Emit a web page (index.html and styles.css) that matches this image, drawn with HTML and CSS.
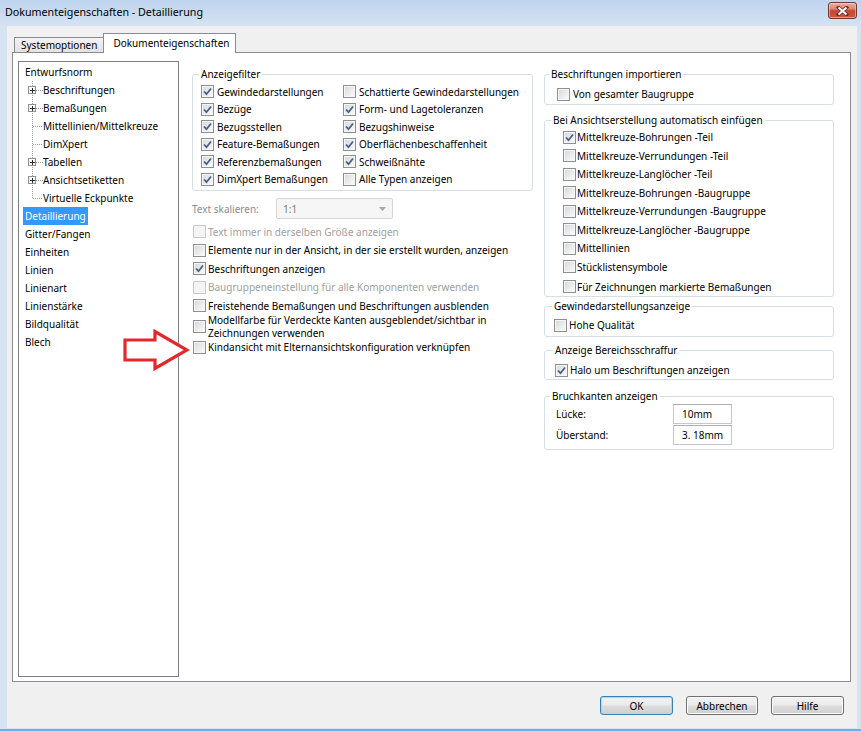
FILE: index.html
```html
<!DOCTYPE html>
<html lang="de">
<head>
<meta charset="utf-8">
<title>Dokumenteigenschaften - Detaillierung</title>
<link rel="stylesheet" href="styles.css">
</head>
<body>
<div class="window">
  <div class="titlebar">
    <span class="title">Dokumenteigenschaften - Detaillierung</span>
    <span class="close"><svg width="13" height="10" viewBox="0 0 13 10"><path d="M2.5 1.5 L10.5 8.5 M10.5 1.5 L2.5 8.5" stroke="#6b3027" stroke-width="3.6" stroke-linecap="square" fill="none"/><path d="M2.5 1.5 L10.5 8.5 M10.5 1.5 L2.5 8.5" stroke="#fff" stroke-width="2" fill="none"/></svg></span>
  </div>
  <div class="client">
    <div class="tabs">
      <div class="tab">Systemoptionen</div>
      <div class="tab active">Dokumenteigenschaften</div>
    </div>
    <div class="panel">
      <div class="tree">
        <div class="trow">Entwurfsnorm</div>
        <div class="trow"><svg class="gut" width="18" height="18"><path d="M7.5 0 V18 M11 9.5 H18" class="dots"/><rect x="3.5" y="5.5" width="7" height="7" class="pbox"/><path d="M5 9.5 H10 M7.5 7 V12" class="plus"/></svg>Beschriftungen</div>
        <div class="trow"><svg class="gut" width="18" height="18"><path d="M7.5 0 V18 M11 9.5 H18" class="dots"/><rect x="3.5" y="5.5" width="7" height="7" class="pbox"/><path d="M5 9.5 H10 M7.5 7 V12" class="plus"/></svg>Bemaßungen</div>
        <div class="trow"><svg class="gut" width="18" height="18"><path d="M7.5 0 V18 M8 9.5 H18" class="dots"/></svg>Mittellinien/Mittelkreuze</div>
        <div class="trow"><svg class="gut" width="18" height="18"><path d="M7.5 0 V18 M8 9.5 H18" class="dots"/></svg>DimXpert</div>
        <div class="trow"><svg class="gut" width="18" height="18"><path d="M7.5 0 V18 M11 9.5 H18" class="dots"/><rect x="3.5" y="5.5" width="7" height="7" class="pbox"/><path d="M5 9.5 H10 M7.5 7 V12" class="plus"/></svg>Tabellen</div>
        <div class="trow"><svg class="gut" width="18" height="18"><path d="M7.5 0 V18 M11 9.5 H18" class="dots"/><rect x="3.5" y="5.5" width="7" height="7" class="pbox"/><path d="M5 9.5 H10 M7.5 7 V12" class="plus"/></svg>Ansichtsetiketten</div>
        <div class="trow"><svg class="gut" width="18" height="18"><path d="M7.5 0 V9.5 M8 9.5 H18" class="dots"/></svg>Virtuelle Eckpunkte</div>
        <div class="trow"><span class="sel">Detaillierung</span></div>
        <div class="trow">Gitter/Fangen</div>
        <div class="trow">Einheiten</div>
        <div class="trow">Linien</div>
        <div class="trow">Linienart</div>
        <div class="trow">Linienstärke</div>
        <div class="trow">Bildqualität</div>
        <div class="trow">Blech</div>
      </div>

      <div class="middle">
        <fieldset class="grp filter">
          <legend>Anzeigefilter</legend>
          <div class="fgrid">
            <div class="frow"><span class="cb on"><svg width="11" height="11"><path d="M2 5.5 L4.5 8.2 L9 2.5"/></svg></span>Gewindedarstellungen</div>
            <div class="frow"><span class="cb"></span>Schattierte Gewindedarstellungen</div>
            <div class="frow"><span class="cb on"><svg width="11" height="11"><path d="M2 5.5 L4.5 8.2 L9 2.5"/></svg></span>Bezüge</div>
            <div class="frow"><span class="cb on"><svg width="11" height="11"><path d="M2 5.5 L4.5 8.2 L9 2.5"/></svg></span>Form- und Lagetoleranzen</div>
            <div class="frow"><span class="cb on"><svg width="11" height="11"><path d="M2 5.5 L4.5 8.2 L9 2.5"/></svg></span>Bezugsstellen</div>
            <div class="frow"><span class="cb on"><svg width="11" height="11"><path d="M2 5.5 L4.5 8.2 L9 2.5"/></svg></span>Bezugshinweise</div>
            <div class="frow"><span class="cb on"><svg width="11" height="11"><path d="M2 5.5 L4.5 8.2 L9 2.5"/></svg></span>Feature-Bemaßungen</div>
            <div class="frow"><span class="cb on"><svg width="11" height="11"><path d="M2 5.5 L4.5 8.2 L9 2.5"/></svg></span>Oberflächenbeschaffenheit</div>
            <div class="frow"><span class="cb on"><svg width="11" height="11"><path d="M2 5.5 L4.5 8.2 L9 2.5"/></svg></span>Referenzbemaßungen</div>
            <div class="frow"><span class="cb on"><svg width="11" height="11"><path d="M2 5.5 L4.5 8.2 L9 2.5"/></svg></span>Schweißnähte</div>
            <div class="frow"><span class="cb on"><svg width="11" height="11"><path d="M2 5.5 L4.5 8.2 L9 2.5"/></svg></span>DimXpert Bemaßungen</div>
            <div class="frow"><span class="cb"></span>Alle Typen anzeigen</div>
          </div>
        </fieldset>

        <div class="scale-row">
          <span class="scale-label">Text skalieren:</span>
          <span class="combo"><span>1:1</span><svg width="7" height="4"><path d="M0 0 H7 L3.5 4 Z" fill="#a8a8a8"/></svg></span>
        </div>

        <div class="opts">
          <div class="opt dis"><span class="cb"></span>Text immer in derselben Größe anzeigen</div>
          <div class="opt"><span class="cb"></span>Elemente nur in der Ansicht, in der sie erstellt wurden, anzeigen</div>
          <div class="opt"><span class="cb on"><svg width="11" height="11"><path d="M2 5.5 L4.5 8.2 L9 2.5"/></svg></span>Beschriftungen anzeigen</div>
          <div class="opt dis"><span class="cb"></span>Baugruppeneinstellung für alle Komponenten verwenden</div>
          <div class="opt"><span class="cb"></span>Freistehende Bemaßungen und Beschriftungen ausblenden</div>
          <div class="opt two"><span class="cb"></span><span class="txt2">Modellfarbe für Verdeckte Kanten ausgeblendet/sichtbar in<br>Zeichnungen verwenden</span></div>
          <div class="opt"><span class="cb"></span>Kindansicht mit Elternansichtskonfiguration verknüpfen</div>
        </div>
      </div>

      <div class="right">
        <fieldset class="grp g1">
          <legend>Beschriftungen importieren</legend>
          <div class="rrow"><span class="cb"></span>Von gesamter Baugruppe</div>
        </fieldset>
        <fieldset class="grp g2">
          <legend>Bei Ansichtserstellung automatisch einfügen</legend>
          <div class="rrow"><span class="cb on"><svg width="11" height="11"><path d="M2 5.5 L4.5 8.2 L9 2.5"/></svg></span>Mittelkreuze-Bohrungen -Teil</div>
          <div class="rrow"><span class="cb"></span>Mittelkreuze-Verrundungen -Teil</div>
          <div class="rrow"><span class="cb"></span>Mittelkreuze-Langlöcher -Teil</div>
          <div class="rrow"><span class="cb"></span>Mittelkreuze-Bohrungen -Baugruppe</div>
          <div class="rrow"><span class="cb"></span>Mittelkreuze-Verrundungen -Baugruppe</div>
          <div class="rrow"><span class="cb"></span>Mittelkreuze-Langlöcher -Baugruppe</div>
          <div class="rrow"><span class="cb"></span>Mittellinien</div>
          <div class="rrow"><span class="cb"></span>Stücklistensymbole</div>
          <div class="rrow last"><span class="cb"></span>Für Zeichnungen markierte Bemaßungen</div>
        </fieldset>
        <fieldset class="grp g3">
          <legend>Gewindedarstellungsanzeige</legend>
          <div class="rrow"><span class="cb"></span>Hohe Qualität</div>
        </fieldset>
        <fieldset class="grp g4">
          <legend>Anzeige Bereichsschraffur</legend>
          <div class="rrow"><span class="cb on"><svg width="11" height="11"><path d="M2 5.5 L4.5 8.2 L9 2.5"/></svg></span>Halo um Beschriftungen anzeigen</div>
        </fieldset>
        <fieldset class="grp g5">
          <legend>Bruchkanten anzeigen</legend>
          <div class="field-row first"><span class="field-label">Lücke:</span><span class="input">10mm</span></div>
          <div class="field-row"><span class="field-label">Überstand:</span><span class="input">3. 18mm</span></div>
        </fieldset>
      </div>
    </div>
    <div class="footer">
      <button class="btn default">OK</button>
      <button class="btn">Abbrechen</button>
      <button class="btn">Hilfe</button>
    </div>
  </div>
  <svg class="arrow" width="67" height="42" viewBox="0 0 67 42"><path d="M2 11 H32 V2.5 L64 21 L32 39.5 V31 H2 Z" fill="#fff" stroke="#e5262a" stroke-width="3.2"/></svg>
</div>
</body>
</html>
```

FILE: styles.css
```css
* { box-sizing: border-box; }

body {
  margin: 0;
  font-family: "Noto Sans", "Segoe UI", "DejaVu Sans", sans-serif;
  font-size: 10px;
  color: #000;
}

.window {
  position: relative;
  width: 861px;
  height: 731px;
  display: flex;
  flex-direction: column;
  background: #d6e3f3;
  border-bottom: 2px solid #62b6de;
  overflow: hidden;
}

.titlebar {
  height: 26px;
  flex: none;
  display: flex;
  justify-content: space-between;
  align-items: flex-start;
  padding: 0 4px 0 5px;
  background: linear-gradient(#bfd4ee, #d5e2f3);
}

.title {
  font-size: 10.7px;
  line-height: 24px;
}

.close {
  margin-top: 2px;
  width: 29px;
  height: 17px;
  border: 1px solid #6e3a33;
  border-radius: 3px;
  background: linear-gradient(#eab2a4 0%, #dc8471 40%, #c5462f 52%, #cf5a41 100%);
  box-shadow: inset 0 0 0 1px rgba(255, 220, 210, 0.5);
  display: flex;
  align-items: center;
  justify-content: center;
}

.client {
  flex: 1;
  margin: 0 4px 1px 7px;
  background: #f0f0f0;
  display: flex;
  flex-direction: column;
}

.tabs {
  height: 26px;
  flex: none;
  display: flex;
  align-items: flex-end;
  padding-left: 7px;
}

.tab {
  height: 15px;
  padding: 0 6px;
  border: 1px solid #898c95;
  border-bottom: none;
  background: linear-gradient(#f3f3f3, #e3e3e3);
  line-height: 14px;
  white-space: nowrap;
}

.tab.active {
  height: 20px;
  margin-bottom: -1px;
  margin-left: -1px;
  padding: 0 5px 0 9px;
  background: #fff;
  line-height: 18px;
  position: relative;
  z-index: 1;
}

.panel {
  height: 630px;
  flex: none;
  margin: 0 6px 0 5px;
  border: 1px solid #898c95;
  background: #fff;
  display: flex;
  align-items: flex-start;
  padding: 8px 0 0 5px;
}

/* tree */
.tree {
  width: 161px;
  height: 616px;
  flex: none;
  border: 1px solid #7f7f7f;
  padding: 1px 0 0 6px;
}

.trow {
  height: 18px;
  display: flex;
  align-items: center;
  white-space: nowrap;
}

.gut { flex: none; }
.dots { stroke: #9a9a9a; stroke-width: 1; stroke-dasharray: 1 1; fill: none; }
.pbox { fill: #fff; stroke: #8f8f8f; stroke-width: 1; }
.plus { stroke: #2b2b2b; stroke-width: 1; fill: none; }

.sel {
  background: #3399ff;
  color: #fff;
  margin-left: -2px;
  padding: 0 2px;
  line-height: 18px;
}

/* middle column */
.middle {
  width: 341px;
  flex: none;
  margin-left: 13px;
  padding-top: 6px;
}

.grp {
  margin: 0;
  padding: 0;
  min-width: 0;
  border: 1px solid #d5dfe5;
  border-radius: 3px;
}

.grp legend {
  padding: 0 2px;
  margin-left: 6px;
  line-height: 15px;
}

.fgrid {
  display: grid;
  grid-template-columns: 142px 1fr;
  padding: 1px 0 2px 8px;
}

.frow, .opt, .rrow {
  display: flex;
  align-items: center;
  white-space: nowrap;
}

.frow { height: 17.5px; }
.frow .cb { margin-right: 3px; }

.cb {
  flex: none;
  width: 13px;
  height: 13px;
  border: 1px solid #8e8f8f;
  background: linear-gradient(135deg, #d4d6d9 0%, #f7f7f7 85%);
  box-shadow: inset 0 0 0 1px #f6f6f6;
  display: flex;
  align-items: center;
  justify-content: center;
}

.cb svg path {
  fill: none;
  stroke: #4a5f86;
  stroke-width: 1.8;
}

.scale-row {
  margin-top: 7px;
  height: 21px;
  display: flex;
  align-items: center;
  color: #8d8d8d;
}

.scale-label { width: 84px; }

.combo {
  width: 117px;
  height: 21px;
  border: 1px solid #d6d6d6;
  border-radius: 2px;
  background: #f6f6f6;
  display: flex;
  align-items: center;
  justify-content: space-between;
  padding: 0 6px;
  color: #7a7a7a;
}

.opts { margin-top: 3.5px; }

.opt {
  height: 18.5px;
  padding-left: 1px;
}

.opt .cb { margin-right: 2px; }

.opt.two { height: 23px; }
.txt2 { line-height: 12.5px; }

.opt.dis { color: #a0a0a0; }
.opt.dis .cb {
  border-color: #c9c9c9;
  background: #f4f4f4;
  box-shadow: none;
}

/* right column */
.right {
  width: 290px;
  flex: none;
  margin-left: 11px;
  padding-top: 6px;
}

.rrow { height: 18px; }

.g1 { padding: 3px 0 1px 0; }
.g1 legend { margin-left: 4px; }
.g1 .rrow { padding-left: 12px; }
.g1 .cb { margin-right: 3px; }

.g2 { margin-top: 8px; padding: 0; }
.g2 legend { margin-left: 6px; }
.g2 .rrow { height: 18.5px; padding-left: 18px; }
.g2 .rrow.last { margin-top: 1.5px; }
.g2 .cb { margin-right: 1px; }

.g3 { margin-top: 2px; padding: 2px 0 2px 0; }
.g3 legend { margin-left: 7px; }
.g3 .rrow { padding-left: 9px; }
.g3 .cb { margin-right: 2px; }

.g4 { margin-top: 6px; padding: 3px 0 0 0; }
.g4 legend { margin-left: 8px; }
.g4 .rrow { padding-left: 10px; }
.g4 .cb { margin-right: 2px; }

.g5 { margin-top: 9px; padding: 0 0 3px 0; }
.g5 legend { margin-left: 5px; }

.field-row {
  display: flex;
  align-items: center;
  height: 21.5px;
  padding-left: 11px;
}

.field-row.first { margin-top: -1px; }

.field-label { width: 117px; }

.input {
  width: 59px;
  height: 20px;
  border: 1px solid #c6c6c6;
  border-top-color: #abadb3;
  background: #fff;
  padding-left: 8px;
  line-height: 18px;
}

/* footer */
.footer {
  flex: 1;
  display: flex;
  justify-content: flex-end;
  align-items: flex-start;
  gap: 13px;
  padding: 14px 13px 0 0;
}

.btn {
  width: 73px;
  height: 19px;
  padding: 0;
  font: inherit;
  color: #000;
  border: 1px solid #707070;
  border-radius: 3px;
  background: linear-gradient(#f2f2f2 0%, #ebebeb 48%, #dddddd 52%, #cfcfcf 100%);
  box-shadow: inset 0 0 0 1px #fbfbfb;
}

.btn:nth-child(2) { width: 72px; }

.btn.default {
  border-color: #3c7fb1;
  box-shadow: inset 0 0 0 1px #a9d8f3;
}

/* annotation arrow drawn over the dialog */
.arrow {
  position: absolute;
  left: 123px;
  top: 329px;
}
```
